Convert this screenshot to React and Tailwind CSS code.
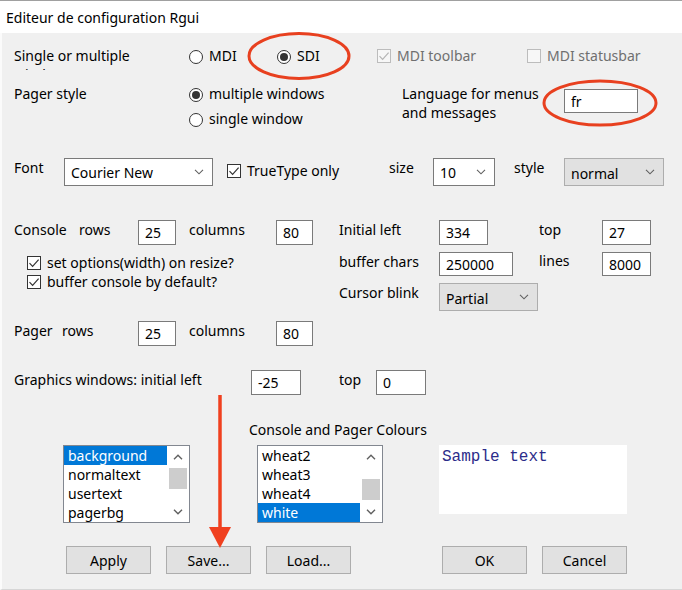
import React from "react";

const Radio = ({ checked, label, className = "" }) => (
  <div className={`flex items-center h-[19px] ${className}`}>
    <span className="w-[14px] h-[14px] mt-[2px] rounded-full border border-[#333] bg-white flex items-center justify-center shrink-0">
      {checked && <span className="w-[8px] h-[8px] rounded-full bg-[#333]" />}
    </span>
    <span className="ml-[6px]">{label}</span>
  </div>
);

const Check = ({ checked, label, disabled, className = "" }) => (
  <div className={`flex items-center ${className}`}>
    <span
      className={`w-[14px] h-[14px] mt-[1px] border flex items-center justify-center shrink-0 ${
        disabled ? "border-[#bcbcbc] bg-[#f7f7f7]" : "border-[#333] bg-white"
      }`}
    >
      {checked && (
        <svg width="12" height="12" viewBox="0 0 12 12">
          <path d="M1.5 6.2 L4.6 9.3 L10.6 2.6" fill="none" stroke={disabled ? "#b5b5b5" : "#333"} strokeWidth="1.2" />
        </svg>
      )}
    </span>
    <span className={`ml-[6px] ${disabled ? "text-[#6f6f6f]" : ""}`}>{label}</span>
  </div>
);

const Input = ({ value, className = "" }) => (
  <div className={`bg-white border border-[#7a7a7a] flex items-center pl-[6px] shrink-0 ${className}`}>{value}</div>
);

const Chevron = () => (
  <svg width="10" height="6" viewBox="0 0 10 6" className="shrink-0">
    <path d="M1 0.8 L5 4.8 L9 0.8" fill="none" stroke="#606060" strokeWidth="1.1" />
  </svg>
);

const Select = ({ value, gray, className = "" }) => (
  <div
    className={`border flex items-center justify-between pl-[6px] pr-[8px] shrink-0 ${
      gray ? "bg-[#e1e1e1] border-[#adadad]" : "bg-white border-[#7a7a7a]"
    } ${className}`}
  >
    <span className={gray ? "mt-[2px]" : ""}>{value}</span>
    <Chevron />
  </div>
);

const ListBox = ({ items, selected, thumbTop, className = "" }) => (
  <div className={`flex border border-[#828790] bg-white h-[78px] shrink-0 ${className}`}>
    <div className="flex-1 flex flex-col">
      {items.map((it, i) => (
        <div
          key={it}
          className={`h-[19px] leading-[19px] pl-[4px] ${i === selected ? "bg-[#0078d7] text-white" : ""}`}
        >
          {it}
        </div>
      ))}
    </div>
    <div className="w-[22px] flex flex-col items-center">
      <svg width="10" height="6" viewBox="0 0 10 6" className="mt-[8px]">
        <path d="M1 5.2 L5 1.2 L9 5.2" fill="none" stroke="#606060" strokeWidth="1.4" />
      </svg>
      <div className={`w-[18px] h-[21px] bg-[#cdcdcd] ${thumbTop}`} />
      <div className="flex-1" />
      <svg width="10" height="6" viewBox="0 0 10 6" className="mb-[7px]">
        <path d="M1 0.8 L5 4.8 L9 0.8" fill="none" stroke="#606060" strokeWidth="1.4" />
      </svg>
    </div>
  </div>
);

const Button = ({ label }) => (
  <div className="w-[85px] h-[28px] bg-[#e1e1e1] border border-[#adadad] flex items-center justify-center shrink-0">
    {label}
  </div>
);

export default function App() {
  return (
    <div className="relative w-[682px] h-[590px] overflow-hidden bg-[#f0f0f0] text-black text-[14px] leading-[19px] font-['Noto_Sans',sans-serif] flex flex-col">
      {/* title bar */}
      <div className="h-[33px] shrink-0 bg-white border-t border-[#a0a0a0] flex items-center pl-[6px] text-[14px]">
        Editeur de configuration Rgui
      </div>

      {/* body */}
      <div className="flex-1 bg-[#f0f0f0] pl-[14px] flex flex-col border-l-[2px] border-b border-l-[#fbfbfb] border-b-[#d6d6d6]">
        {/* row 1 */}
        <div className="flex items-start mt-[13px] -ml-[2px]">
          <div className="w-[175px] h-[24px] overflow-hidden">
            <div className="w-[130px]">Single or multiple windows</div>
          </div>
          <Radio label="MDI" className="w-[88px]" />
          <Radio label="SDI" checked className="w-[100px]" />
          <Check label="MDI toolbar" checked disabled className="w-[150px] h-[19px]" />
          <Check label="MDI statusbar" disabled className="h-[19px]" />
        </div>

        {/* row 2 */}
        <div className="flex items-start mt-[14px] -ml-[2px]">
          <div className="w-[175px]">Pager style</div>
          <div className="w-[213px] flex flex-col gap-[6px]">
            <Radio label="multiple windows" checked />
            <Radio label="single window" />
          </div>
          <div className="w-[162px]">
            Language for menus
            <br />
            and messages
          </div>
          <Input value="fr" className="w-[74px] h-[24px] mt-[5px]" />
        </div>

        {/* font row */}
        <div className="flex items-start mt-[30px] -ml-[2px]">
          <div className="w-[50px]">Font</div>
          <Select value="Courier New" className="w-[149px] h-[28px]" />
          <Check label="TrueType only" checked className="w-[162px] h-[25px] ml-[14px]" />
          <div className="w-[44px]">size</div>
          <Select value="10" className="w-[62px] h-[28px]" />
          <div className="w-[50px] ml-[19px]">style</div>
          <Select value="normal" gray className="w-[100px] h-[28px]" />
        </div>

        {/* console section */}
        <div className="flex items-start mt-[32px] -ml-[2px]">
          <div className="w-[325px] flex flex-col">
            <div className="flex items-start">
              <div className="w-[65px] mt-[2px]">Console</div>
              <div className="w-[59px] mt-[2px]">rows</div>
              <Input value="25" className="w-[38px] h-[25px] mt-[2px]" />
              <div className="w-[87px] ml-[13px] mt-[2px]">columns</div>
              <Input value="80" className="w-[37px] h-[25px] mt-[2px]" />
            </div>
            <div className="flex flex-col ml-[13px] mt-[8px]">
              <Check label="set options(width) on resize?" checked className="h-[19px]" />
              <Check label="buffer console by default?" checked className="h-[19px]" />
            </div>
          </div>
          <div className="flex flex-col">
            <div className="flex items-start">
              <div className="w-[100px] mt-[2px]">Initial left</div>
              <div className="w-[100px]">
                <Input value="334" className="w-[49px] h-[25px] mt-[2px]" />
              </div>
              <div className="w-[63px] mt-[2px]">top</div>
              <Input value="27" className="w-[49px] h-[25px] mt-[2px]" />
            </div>
            <div className="flex items-start mt-[5px]">
              <div className="w-[100px] mt-[2px]">buffer chars</div>
              <div className="w-[100px]">
                <Input value="250000" className="w-[74px] h-[24px] mt-[2px]" />
              </div>
              <div className="w-[63px] mt-[1px]">lines</div>
              <Input value="8000" className="w-[49px] h-[24px] mt-[2px]" />
            </div>
            <div className="flex items-start mt-[6px]">
              <div className="w-[100px] mt-[1px]">Cursor blink</div>
              <Select value="Partial" gray className="w-[99px] h-[28px] mt-[1px]" />
            </div>
          </div>
        </div>

        {/* pager row */}
        <div className="flex items-start mt-[8px] -ml-[2px]">
          <div className="w-[48px] mt-[2px]">Pager</div>
          <div className="w-[76px] mt-[2px]">rows</div>
          <Input value="25" className="w-[38px] h-[25px] mt-[2px]" />
          <div className="w-[87px] ml-[13px] mt-[2px]">columns</div>
          <Input value="80" className="w-[37px] h-[25px] mt-[2px]" />
        </div>

        {/* graphics row */}
        <div className="flex items-start mt-[22px] -ml-[2px]">
          <div className="w-[237px] mt-[2px]">Graphics windows: initial left</div>
          <Input value="-25" className="w-[50px] h-[25px] mt-[2px]" />
          <div className="w-[37px] ml-[38px] mt-[2px]">top</div>
          <Input value="0" className="w-[50px] h-[25px] mt-[2px]" />
        </div>

        {/* colours */}
        <div className="ml-[233px] mt-[25px]">Console and Pager Colours</div>
        <div className="flex items-start mt-[6px] -ml-[2px]">
          <ListBox
            items={["background", "normaltext", "usertext", "pagerbg"]}
            selected={0}
            thumbTop="mt-[8px]"
            className="w-[127px] ml-[49px]"
          />
          <ListBox
            items={["wheat2", "wheat3", "wheat4", "white"]}
            selected={3}
            thumbTop="mt-[19px]"
            className="w-[126px] ml-[67px]"
          />
          <div className="w-[188px] h-[69px] bg-white ml-[56px] pl-[3px] pt-[3px] font-['Liberation_Mono',monospace] text-[16px] text-[#2c2c8a]">
            Sample text
          </div>
        </div>

        {/* buttons */}
        <div className="flex items-start mt-[23px] ml-[50px]">
          <Button label="Apply" />
          <div className="ml-[15px]">
            <Button label="Save..." />
          </div>
          <div className="ml-[15px]">
            <Button label="Load..." />
          </div>
          <div className="ml-[91px]">
            <Button label="OK" />
          </div>
          <div className="ml-[15px]">
            <Button label="Cancel" />
          </div>
        </div>
      </div>

      {/* red annotations */}
      <svg
        className="absolute left-0 top-0 pointer-events-none"
        width="682"
        height="590"
        viewBox="0 0 682 590"
      >
        <ellipse cx="299" cy="56" rx="50" ry="22.5" fill="none" stroke="#e8401f" strokeWidth="3" />
        <ellipse cx="600" cy="103" rx="56" ry="22" fill="none" stroke="#e8401f" strokeWidth="3" />
        <line x1="220" y1="395" x2="220" y2="530" stroke="#f0401f" strokeWidth="3.5" />
        <polygon points="209,527 231,527 220,548" fill="#f0401f" />
      </svg>
    </div>
  );
}
